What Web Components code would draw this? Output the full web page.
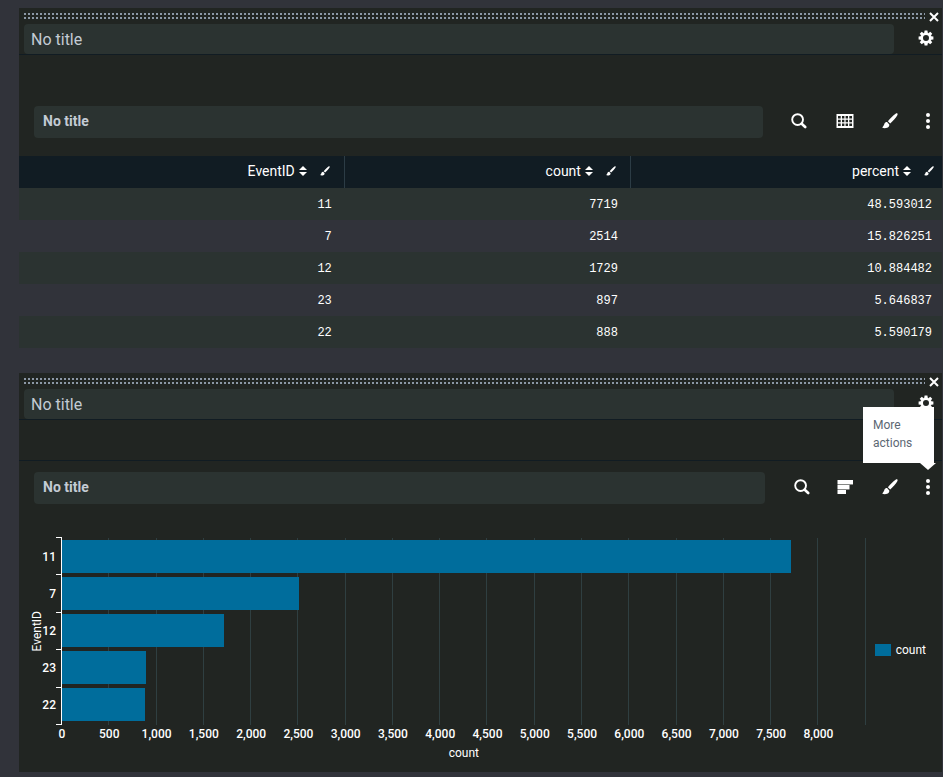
<!DOCTYPE html>
<html lang="en">
<head>
<meta charset="utf-8">
<title>Dashboard editor</title>
<style>
  html { background: #31333a; }
  body {
    margin: 0;
    color: #fff;
    font-family: Roboto, "Liberation Sans", sans-serif;
    font-size: 14px;
    --panel: #212522;
    --field: #2b3331;
    --head: #111c23;
    --page: #31333a;
    --muted: #c3cbd4;
    --grid: #2f3f41;
    --bar: #006d9c;
  }
</style>
</head>
<body>
<dash-board>
  <dash-panel>
    <viz-toolbar kind="table"></viz-toolbar>
    <stats-table></stats-table>
  </dash-panel>
  <dash-panel>
    <viz-toolbar kind="bars" divided tip="More actions"></viz-toolbar>
    <bar-chart></bar-chart>
  </dash-panel>
</dash-board>

<script>
const define = (name, render) => customElements.define(name, class extends HTMLElement {
  connectedCallback() {
    if (this.shadowRoot) return;
    this.attachShadow({ mode: 'open' }).innerHTML = render(this);
  }
});

const controls = `
  *, *::before, *::after { box-sizing: border-box; }
  button { appearance: none; border: 0; padding: 0; margin: 0; background: none; color: inherit; font: inherit; cursor: pointer; }
  input { appearance: none; border: 0; margin: 0; min-width: 0; background: var(--field); color: var(--muted); font: inherit; outline: 0; }
  input::placeholder { color: var(--muted); opacity: 1; }
`;

const rows = [
  ['11', 7719, '48.593012'],
  ['7', 2514, '15.826251'],
  ['12', 1729, '10.884482'],
  ['23', 897, '5.646837'],
  ['22', 888, '5.590179']
];

const tooth = [0, 45, 90, 135, 180, 225, 270, 315]
  .map(a => `<path d="M6.2 3 6.600 .6h2.800L9.800 3z" transform="rotate(${a} 8 8)"/>`).join('');

const icons = {
  close: [10, 10, '<path d="M1 1l8 8M9 1L1 9" stroke="currentColor" stroke-width="2" fill="none"/>'],
  gear: [16, 16, `${tooth}<circle cx="8" cy="8" r="4.3" fill="none" stroke="currentColor" stroke-width="2.6"/>`],
  search: [16, 16, '<g fill="none" stroke="currentColor"><circle cx="6.6" cy="6.6" r="5.4" stroke-width="1.9"/><path d="M10.700 10.700l3.500 3.300" stroke-width="2.6" stroke-linecap="round"/></g>'],
  table: [18, 14, '<path fill-rule="evenodd" d="M.5 0h17v14H.5zM2 2v2.500h2.700V2zM6 2v2.500h2.400V2zM9.600 2v2.500H12V2zM13.300 2v2.500H16V2zM2 5.700v2.600h2.700V5.700zM6 5.700v2.600h2.400V5.700zM9.600 5.700v2.600H12V5.700zM13.300 5.700v2.600H16V5.700zM2 9.500V12h2.700V9.500zM6 9.500V12h2.400V9.500zM9.600 9.500V12H12V9.500zM13.300 9.500V12H16V9.500z"/>'],
  bars: [16, 14, '<path d="M.5 0H16v4H.5zM.5 5h12v4H.5zM.5 10h8.5v4H.5z"/><path opacity=".45" d="M.5 4H16v1H.5zM.5 9h12v1H.5z"/>'],
  brush: [16, 16, '<path d="M15.4.6c-.5-.5-1.2-.3-1.800.1C11 2.600 8 5.400 5.900 8.200l2.300 2.200C11 8 13.700 5 15.200 2.400c.4-.6.7-1.300.2-1.800zM5.100 9.100c-1.200-.1-2.200.5-2.700 1.700-.4 1.200-.8 2.500-2.200 3.600 1 .8 3.100 1 5 .3 1.500-.6 2.300-1.900 2.100-3.300z"/>'],
  dots: [4, 16, '<circle cx="2" cy="2" r="2"/><circle cx="2" cy="8" r="2"/><circle cx="2" cy="14" r="2"/>'],
  sort: [8, 10, '<path d="M4 0l4 4H0zM4 10l4-4H0z"/>']
};
const icon = (name, w) => {
  const [x, y, body] = icons[name];
  const width = w || x;
  return `<svg viewBox="0 0 ${x} ${y}" width="${width}" height="${Math.round(y * width / x)}" fill="currentColor" aria-hidden="true" style="display:block">${body}</svg>`;
};

define('dash-board', () => `
  <style>
    :host { display: flex; flex-direction: column; gap: 25px; padding: 8px 1px 5px 19px; }
  </style>
  <slot></slot>`);

define('dash-panel', () => `
  <style>
    ${controls}
    :host { display: block; background: var(--panel); }
    .drag { display: flex; align-items: center; gap: 4px; height: 16px; padding: 2px 3px 0 5px; }
    .dots {
      flex: 1; height: 6px; margin-bottom: 2px; cursor: move;
      background: conic-gradient(from 270deg at 2px 2px, #8c98a6 90deg, transparent 0) 0 0 / 4px 4px;
    }
    .title { display: flex; align-items: center; height: 31px; padding-left: 5px; border-bottom: 1px solid var(--head); }
    .title input { flex: 1; height: 30px; padding: 0 7px; border-radius: 4px; font-size: 16px; }
    .gear { display: grid; place-items: center; width: 32px; height: 30px; margin-left: 16px; padding-bottom: 2px; }
    .inputs { height: 40px; }
  </style>
  <div class="drag"><div class="dots"></div><button aria-label="Close">${icon('close')}</button></div>
  <div class="title">
    <input type="text" placeholder="No title" aria-label="Panel title">
    <button class="gear" aria-label="Panel settings">${icon('gear')}</button>
  </div>
  <div class="inputs"></div>
  <slot></slot>`);

define('viz-toolbar', el => `
  <style>
    ${controls}
    :host { display: flex; align-items: center; padding: 11px 0 18px 15px; --gap: 11px; --search: 50px; }
    :host([divided]) { border-top: 1px solid var(--head); --gap: 15px; --search: 44px; }
    input { flex: 1; height: 32px; padding: 0 9px 2px; margin-right: var(--gap); border-radius: 4px; font-size: 14px; font-weight: 700; }
    button { display: grid; place-items: center; height: 32px; width: 48px; padding-bottom: 2px; }
    .search { width: var(--search); }
    .type { width: 42px; }
    .more { position: relative; width: 28px; }
    .tip {
      position: absolute; right: 8px; bottom: 41px; width: 71px; padding: 9px 10px 11px;
      background: #fff; color: #5c6773; font-size: 12px; line-height: 18px; text-align: left;
    }
    .tip::after {
      content: ""; position: absolute; top: 100%; right: -2px;
      border: 8px solid transparent; border-top: 7px solid #fff; border-bottom: 0;
    }
  </style>
  <input type="text" placeholder="No title" aria-label="Visualization title">
  <button class="search" aria-label="Edit search">${icon('search')}</button>
  <button class="type" aria-label="Select visualization">${icon(el.getAttribute('kind'))}</button>
  <button aria-label="Format visualization">${icon('brush')}</button>
  <button class="more" aria-label="More actions">${icon('dots')}${el.hasAttribute('tip') ? `<span class="tip" role="tooltip">${el.getAttribute('tip')}</span>` : ''}</button>`);

define('stats-table', () => `
  <style>
    ${controls}
    :host { display: block; }
    table { width: 100%; table-layout: fixed; border-collapse: separate; border-spacing: 0; }
    th:nth-child(1) { width: 35.3%; }
    th:nth-child(2) { width: 31%; }
    th { height: 32px; padding: 0 14px 2px 0; background: var(--head); border-right: 1px solid #2c3c45; font-weight: 400; }
    th:last-child { padding-right: 8px; border: 0; }
    .head { display: flex; align-items: center; justify-content: flex-end; gap: 13px; }
    .sort { display: flex; align-items: center; gap: 4px; }
    td {
      height: 32px; padding: 2px 13px 0 0; text-align: right;
      font: 12px "Liberation Mono", monospace;
    }
    td:last-child { padding-right: 10px; }
    tr:nth-child(odd) td { background: var(--field); }
    tr:nth-child(even) td { background: var(--page); }
  </style>
  <table>
    <thead><tr>${['EventID', 'count', 'percent'].map(h => `
      <th scope="col"><div class="head"><button class="sort">${h}${icon('sort')}</button><button aria-label="Format ${h}">${icon('brush', 10)}</button></div></th>`).join('')}
    </tr></thead>
    <tbody>${rows.map(r => `<tr>${r.map(c => `<td>${c}</td>`).join('')}</tr>`).join('')}</tbody>
  </table>`);

const MAX = 8500, STEP = 500, COUNT = MAX / STEP;
define('bar-chart', () => `
  <style>
    ${controls}
    :host {
      display: grid; grid-template-columns: 12px 13px auto 1fr auto;
      padding: 15px 16px 9px 12px; font-size: 12px; font-weight: 500;
    }
    .ytitle, .xtitle, .legend { font-weight: 400; }
    .ytitle { grid-row: 1; justify-self: center; align-self: center; writing-mode: vertical-rl; transform: rotate(180deg); line-height: 12px; }
    .cats { grid-row: 1; display: flex; flex-direction: column; gap: 4px; padding-top: 4px; }
    .cats span { height: 33px; line-height: 33px; display: flex; justify-content: flex-end; }
    .axis { grid-row: 1; display: flex; flex-direction: column; justify-content: space-between; width: 6px; border-right: 1px solid #fff; }
    .axis i { height: 1px; background: #fff; }
    .plot { grid-row: 1; display: grid; height: 188px; }
    .grid, .bars { grid-area: 1 / 1; }
    .grid { display: grid; grid-template-columns: repeat(${COUNT}, 1fr); padding-top: 1px; }
    .grid i { border-right: 1px solid var(--grid); }
    .bars { display: flex; flex-direction: column; gap: 4px; padding-top: 3px; }
    .bars i { height: 33px; background: var(--bar); }
    .labels {
      grid-row: 2; grid-column: 4; display: grid; grid-template-columns: repeat(${COUNT}, 1fr);
      margin: 0 calc(100% / ${COUNT * 2}) 0 calc(-100% / ${COUNT * 2}); line-height: 18px; text-align: center;
    }
    .xtitle { grid-row: 3; grid-column: 4; text-align: center; line-height: 20px; }
    .legend { grid-row: 1 / 4; grid-column: 5; align-self: center; display: flex; align-items: center; gap: 5px; padding-left: 9px; }
    .legend i { width: 16px; height: 12px; background: var(--bar); }
  </style>
  <div class="ytitle">EventID</div>
  <div class="cats">${rows.map(r => `<span>${r[0]}</span>`).join('')}</div>
  <div class="axis">${'<i></i>'.repeat(rows.length + 1)}</div>
  <div class="plot">
    <div class="grid">${'<i></i>'.repeat(COUNT)}</div>
    <div class="bars">${rows.map(r => `<i style="width:calc(${Math.round(r[1] / MAX * 1000) / 10}% - 1px)"></i>`).join('')}</div>
  </div>
  <div class="labels">${Array.from({ length: COUNT }, (_, i) => `<span>${(i * STEP).toLocaleString('en-US')}</span>`).join('')}</div>
  <div class="xtitle">count</div>
  <div class="legend"><i></i><span>count</span></div>`);
</script>
</body>
</html>
